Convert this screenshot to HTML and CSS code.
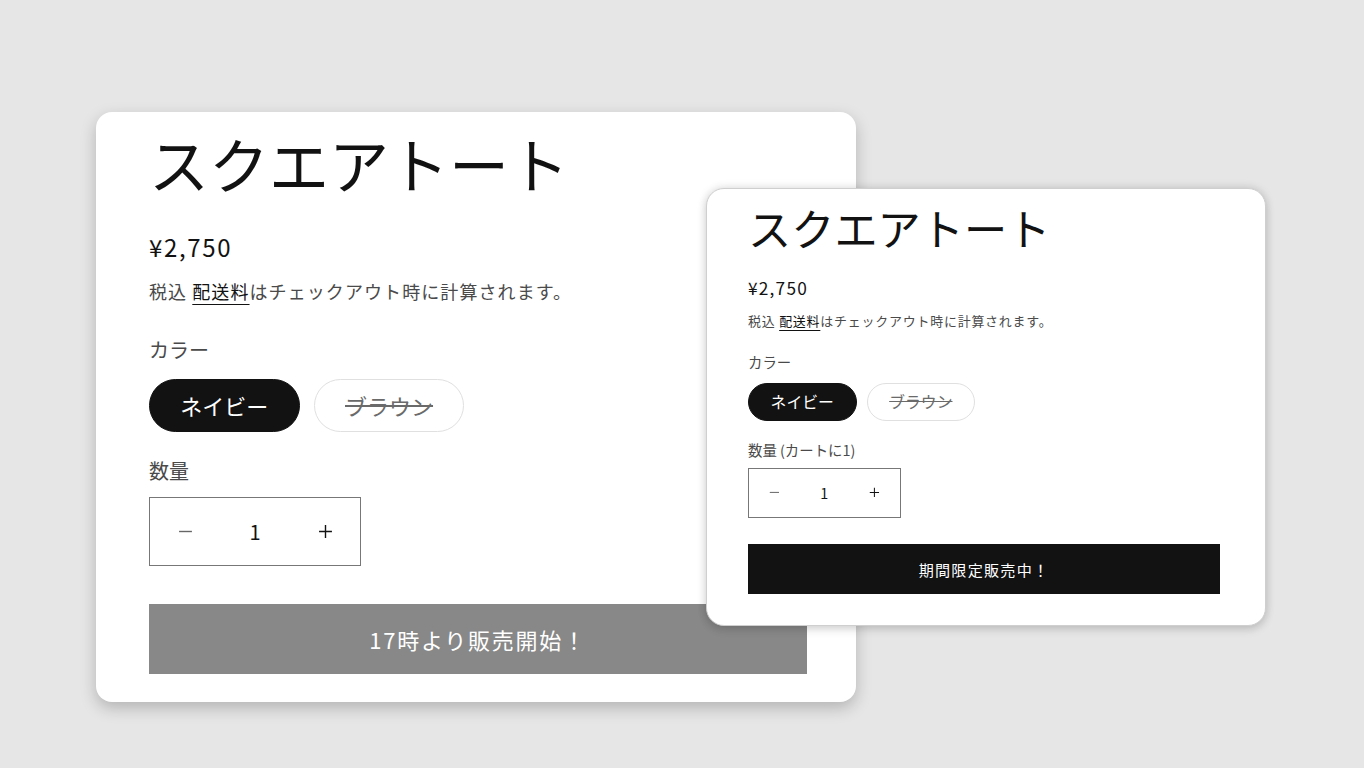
FILE: index.html
```html
<!DOCTYPE html>
<html lang="ja">
<head>
  <meta charset="UTF-8">
  <meta name="viewport" content="width=device-width, initial-scale=1.0">
  <title>スクエアトート</title>
  <link rel="stylesheet" href="styles.css">
</head>
<body>
  <div class="stage">
    <!-- 販売前 -->
    <section class="card card--large">
      <h2 class="title">スクエアトート</h2>
      <p class="price">¥2,750</p>
      <p class="note">税込 <a href="#">配送料</a>はチェックアウト時に計算されます。</p>

      <p class="label label--color">カラー</p>
      <div class="swatches">
        <span class="swatch is-active">ネイビー</span>
        <span class="swatch is-soldout">ブラウン</span>
      </div>

      <p class="label label--qty">数量</p>
      <div class="qty">
        <span class="qty-btn qty-btn--minus">
          <svg viewBox="0 0 14 14"><path d="M1 7h12"/></svg>
        </span>
        <span class="qty-value">1</span>
        <span class="qty-btn">
          <svg viewBox="0 0 14 14"><path d="M1 7h12M7 1v12"/></svg>
        </span>
      </div>

      <button class="buy buy--waiting">17時より販売開始！</button>
    </section>

    <!-- 販売中 -->
    <section class="card card--small">
      <h2 class="title">スクエアトート</h2>
      <p class="price">¥2,750</p>
      <p class="note">税込 <a href="#">配送料</a>はチェックアウト時に計算されます。</p>

      <p class="label label--color">カラー</p>
      <div class="swatches">
        <span class="swatch is-active">ネイビー</span>
        <span class="swatch is-soldout">ブラウン</span>
      </div>

      <p class="label label--qty">数量 (カートに1)</p>
      <div class="qty">
        <span class="qty-btn qty-btn--minus">
          <svg viewBox="0 0 14 14"><path d="M1 7h12"/></svg>
        </span>
        <span class="qty-value">1</span>
        <span class="qty-btn">
          <svg viewBox="0 0 14 14"><path d="M1 7h12M7 1v12"/></svg>
        </span>
      </div>

      <button class="buy">期間限定販売中！</button>
    </section>
  </div>
</body>
</html>
```

FILE: styles.css
```css
html, body {
  margin: 0;
  height: 100%;
}
body {
  background: #e6e6e6;
  font-family: "Noto Sans CJK JP", "Noto Sans", sans-serif;
  color: #121212;
  overflow: hidden;
}
.stage {
  position: relative;
  width: 1364px;
  height: 768px;
}

/* cards */
.card {
  position: absolute;
  background: #fff;
  box-sizing: border-box;
}
.card--large {
  left: 96px;
  top: 112px;
  width: 760px;
  height: 590px;
  padding: 21px 49px 0 53px;
  font-size: 20px;
  border-radius: 16px;
  box-shadow: 0 6px 16px rgba(0, 0, 0, 0.22);
}
.card--small {
  left: 706px;
  top: 188px;
  width: 560px;
  height: 438px;
  padding: 17px 45px 0 41px;
  font-size: 14.4px;
  border-radius: 18px;
  border: 1px solid #cfcfcf;
  box-shadow: 0 0 10px rgba(0, 0, 0, 0.14), 0 4px 10px rgba(0, 0, 0, 0.1);
}

.title {
  margin: 0;
  font-size: 3em;
  line-height: 1;
  font-weight: 400;
}
.price {
  margin: 1.55em 0 0;
  font-size: 1.2em;
  line-height: 1.4;
  letter-spacing: 0.07em;
}
.note {
  margin: 0.8em 0 0;
  font-size: 0.9em;
  line-height: 1.5;
  color: #4a4a4a;
  letter-spacing: 0.06em;
}
.note a {
  color: #121212;
  text-decoration: underline;
  text-underline-offset: 0.28em;
  text-decoration-thickness: 1px;
}

.label {
  margin: 0;
  font-size: 1em;
  line-height: 1.5;
  color: #4a4a4a;
}
.label--color { margin-top: 1.48em; }
.label--qty { margin-top: 1.22em; }

/* color swatches */
.swatches {
  display: flex;
  gap: 0.7em;
  margin-top: 0.7em;
}
.swatch {
  display: flex;
  align-items: center;
  justify-content: center;
  box-sizing: border-box;
  width: 6.85em;
  height: 2.4em;
  border-radius: 1.2em;
  font-size: 1.1em;
  border: 1px solid #e0e0e0;
  color: #6a6a6a;
}
.swatch.is-active {
  background: #121212;
  border-color: #121212;
  color: #fff;
}
.swatch.is-soldout {
  text-decoration: line-through;
}

/* quantity */
.qty {
  display: grid;
  grid-template-columns: repeat(3, 1fr);
  align-items: center;
  box-sizing: border-box;
  width: 10.6em;
  height: 3.45em;
  margin-top: 0.55em;
  border: 1px solid #777;
  text-align: center;
  font-size: 1em;
}
.qty-btn {
  display: flex;
  justify-content: center;
}
.qty-btn svg {
  width: 0.75em;
  height: 0.75em;
  fill: none;
  stroke: #121212;
  stroke-width: 1.3;
}
.qty-btn--minus svg { stroke: #666; }

/* buy button */
.buy {
  display: block;
  width: 100%;
  height: 3.3em;
  margin-top: 1.75em;
  border: none;
  background: #121212;
  color: #fff;
  font-family: inherit;
  font-size: 1.05em;
  letter-spacing: 0.08em;
}
.buy--waiting {
  background: #888;
  font-size: 1.1em;
  height: 3.18em;
  margin-top: 1.73em;
}
```
